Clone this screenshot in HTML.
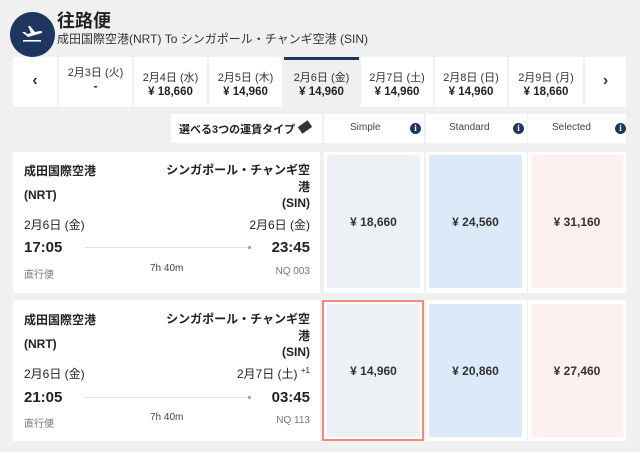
<!DOCTYPE html>
<html><head><meta charset="utf-8"><style>
*{margin:0;padding:0;box-sizing:border-box}
body{width:640px;height:452px;background:#f0f0f0;font-family:"Liberation Sans","Noto Sans CJK JP",sans-serif;color:#222;position:relative;overflow:hidden}
.a{position:absolute}
.w{position:absolute;background:#fff}
.dc{position:absolute;top:57px;height:50px;background:#fff;text-align:center;font-size:11px;color:#333}
.dc .d{margin-top:12px}
.dc .p{font-weight:bold;font-size:11.5px;margin-top:1px;color:#222}
.b{font-weight:bold;font-size:12px}
.pr{position:absolute;display:flex;align-items:center;justify-content:center;font-size:12px;font-weight:bold;color:#333}
.info{position:absolute;width:11px;height:11px;border-radius:50%;background:#1e3560;color:#fff;font-size:9px;font-weight:bold;text-align:center;line-height:11px;font-family:"Liberation Serif",serif}
.g{color:#777;font-size:10px}
</style></head><body>
<div class="a" style="left:10px;top:12px;width:45px;height:45px;border-radius:50%;background:#1e3560"></div>
<svg class="a" style="left:20px;top:23px" width="24" height="22" viewBox="0 0 24 22"><path d="M2 9 L5 9 L7 11 L11 10 L8 3 L10 3 L15 9 L20 8 Q23 8 22 10 L8 14 Z" fill="#fff"/><rect x="3" y="17" width="18" height="1.6" fill="#fff"/></svg>
<div class="a" style="left:57px;top:7px;font-size:18px;font-weight:bold;color:#222">往路便</div>
<div class="a" style="left:57px;top:30px;font-size:12px;color:#333">成田国際空港(NRT) To シンガポール・チャンギ空港 (SIN)</div>

<div class="dc" style="left:13px;width:44px;font-size:16px;font-weight:bold;line-height:48px">‹</div>
<div class="dc" style="left:59px;width:73px"><div class="d" style="margin-top:7px">2月3日 (火)</div><div class="p">-</div></div>
<div class="dc" style="left:134px;width:73px"><div class="d">2月4日 (水)</div><div class="p">¥ 18,660</div></div>
<div class="dc" style="left:209px;width:73px"><div class="d">2月5日 (木)</div><div class="p">¥ 14,960</div></div>
<div class="dc" style="left:284px;width:75px;background:#f0f0f0;border-top:3px solid #1e3560"><div class="d" style="margin-top:9px">2月6日 (金)</div><div class="p">¥ 14,960</div></div>
<div class="dc" style="left:361px;width:72px"><div class="d">2月7日 (土)</div><div class="p">¥ 14,960</div></div>
<div class="dc" style="left:435px;width:72px"><div class="d">2月8日 (日)</div><div class="p">¥ 14,960</div></div>
<div class="dc" style="left:509px;width:74px"><div class="d">2月9日 (月)</div><div class="p">¥ 18,660</div></div>
<div class="dc" style="left:585px;width:41px;font-size:16px;font-weight:bold;line-height:48px">›</div>

<div class="w" style="left:171px;top:114px;width:151px;height:29px"></div>
<div class="a" style="left:179px;top:121px;font-size:11px;font-weight:bold">選べる3つの運賃タイプ</div>
<div class="a" style="left:299px;top:123px;width:12px;height:8px;background:#333;transform:rotate(-35deg)"></div>
<div class="w" style="left:324px;top:114px;width:100px;height:29px"></div>
<div class="w" style="left:426px;top:114px;width:101px;height:29px"></div>
<div class="w" style="left:528px;top:114px;width:98px;height:29px"></div>
<div class="a" style="left:350px;top:122px;font-size:10px;color:#444">Simple</div>
<div class="info" style="left:410px;top:123px">i</div>
<div class="a" style="left:449px;top:122px;font-size:10px;color:#444">Standard</div>
<div class="info" style="left:513px;top:123px">i</div>
<div class="a" style="left:552px;top:122px;font-size:10px;color:#444">Selected</div>
<div class="info" style="left:615px;top:123px">i</div>

<div class="w" style="left:13px;top:152px;width:307px;height:141px"></div>
<div class="w" style="left:324px;top:152px;width:100px;height:141px"></div>
<div class="w" style="left:426px;top:152px;width:101px;height:141px"></div>
<div class="w" style="left:528px;top:152px;width:98px;height:141px"></div>
<div class="pr" style="left:327px;top:155px;width:93px;height:133px;background:#edf0f5">¥ 18,660</div>
<div class="pr" style="left:429px;top:155px;width:93px;height:133px;background:#dbe9f8">¥ 24,560</div>
<div class="pr" style="left:531px;top:155px;width:92px;height:133px;background:#fdf1f0">¥ 31,160</div>
<div class="a b" style="left:24px;top:162px">成田国際空港</div>
<div class="a b" style="left:24px;top:188px">(NRT)</div>
<div class="a b" style="right:330px;top:162px;text-align:right;line-height:16.5px">シンガポール・チャンギ空<br>港<br>(SIN)</div>
<div class="a" style="left:24px;top:216px;font-size:12px">2月6日 (金)</div>
<div class="a" style="right:330px;top:216px;font-size:12px">2月6日 (金)</div>
<div class="a" style="left:24px;top:239px;font-size:15px;font-weight:bold">17:05</div>
<div class="a" style="right:330px;top:239px;font-size:15px;font-weight:bold">23:45</div>
<div class="a" style="left:85px;top:247px;width:165px;height:1px;background:#ddd"></div>
<div class="a" style="left:248px;top:246px;width:3px;height:3px;border-radius:50%;background:#999"></div>
<div class="a g" style="left:24px;top:266px">直行便</div>
<div class="a g" style="left:150px;top:263px;color:#444">7h 40m</div>
<div class="a g" style="right:330px;top:266px">NQ 003</div>

<div class="w" style="left:13px;top:300px;width:307px;height:141px"></div>
<div class="w" style="left:322px;top:300px;width:102px;height:141px;border:2px solid #f08a7a"></div>
<div class="w" style="left:426px;top:300px;width:101px;height:141px"></div>
<div class="w" style="left:528px;top:300px;width:98px;height:141px"></div>
<div class="pr" style="left:327px;top:304px;width:93px;height:133px;background:#edf0f5">¥ 14,960</div>
<div class="pr" style="left:429px;top:304px;width:93px;height:133px;background:#dbe9f8">¥ 20,860</div>
<div class="pr" style="left:531px;top:304px;width:92px;height:133px;background:#fdf1f0">¥ 27,460</div>
<div class="a b" style="left:24px;top:311px">成田国際空港</div>
<div class="a b" style="left:24px;top:337px">(NRT)</div>
<div class="a b" style="right:330px;top:311px;text-align:right;line-height:16.5px">シンガポール・チャンギ空<br>港<br>(SIN)</div>
<div class="a" style="left:24px;top:365px;font-size:12px">2月6日 (金)</div>
<div class="a" style="right:330px;top:365px;font-size:12px">2月7日 (土) <sup style="font-size:8px">+1</sup></div>
<div class="a" style="left:24px;top:389px;font-size:15px;font-weight:bold">21:05</div>
<div class="a" style="right:330px;top:389px;font-size:15px;font-weight:bold">03:45</div>
<div class="a" style="left:85px;top:397px;width:165px;height:1px;background:#ddd"></div>
<div class="a" style="left:248px;top:396px;width:3px;height:3px;border-radius:50%;background:#999"></div>
<div class="a g" style="left:24px;top:415px">直行便</div>
<div class="a g" style="left:150px;top:412px;color:#444">7h 40m</div>
<div class="a g" style="right:330px;top:415px">NQ 113</div>
</body></html>
